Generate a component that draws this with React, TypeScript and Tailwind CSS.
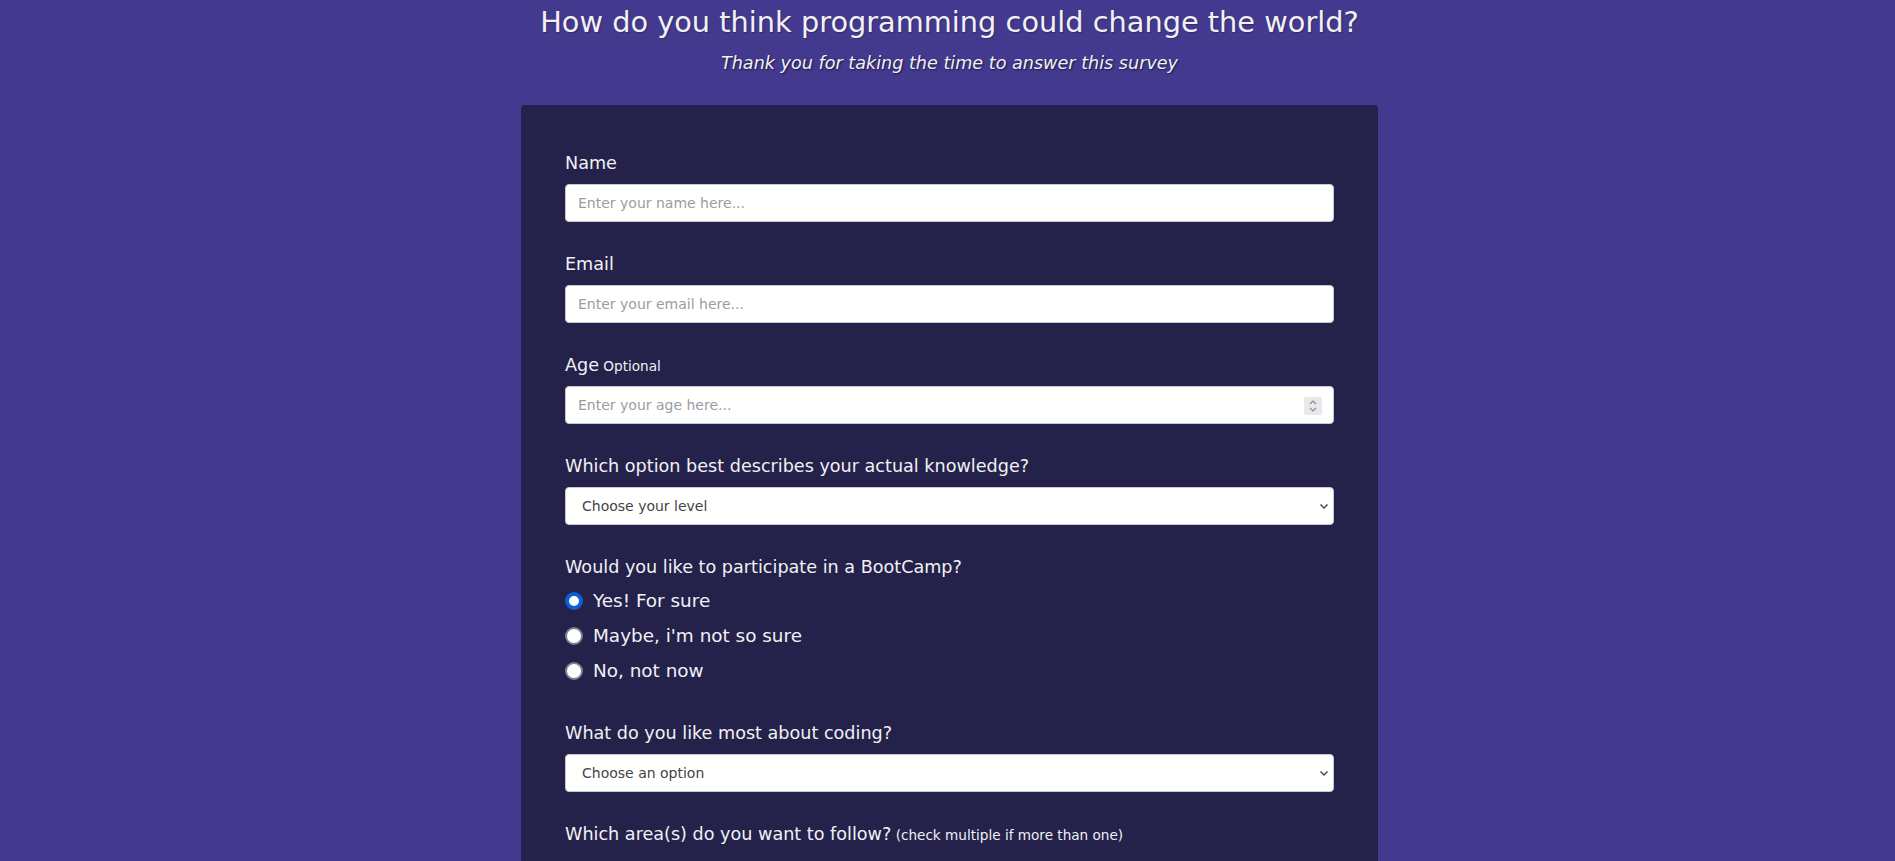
import { useState } from "react";

const levels = ["Choose your level", "Beginner", "Intermediate", "Advanced"];
const likes = ["Choose an option", "Problem solving", "Building things", "The community"];
const areas = ["Front-end", "Back-end", "Mobile", "Data science"];

const Label = ({ text, hint }: { text: string; hint?: string }) => (
    <p className="h-[20.5px] text-[17.6px] leading-[20.5px] text-[#f1f1f4]">
        {text}
        {hint && <span className="text-[13.6px] leading-none"> {hint}</span>}
    </p>
);

const inputCls =
    "w-full h-[38px] rounded-[4px] border border-[#c9c9d3] bg-white px-3 text-[14px] text-[#333] outline-none placeholder:text-[#9b9ba4]";

const Chevron = () => (
    <svg className="pointer-events-none absolute right-[5px] top-1/2 -translate-y-1/2" width="10" height="8" viewBox="0 0 10 8">
        <path d="M1.5 2.5 L5 6 L8.5 2.5" fill="none" stroke="#4a4a55" strokeWidth="1.5" />
    </svg>
);

const Select = ({ options }: { options: string[] }) => (
    <div className="relative">
        <select className={inputCls + " appearance-none pl-4 text-[#444]"} defaultValue={options[0]}>
            {options.map((o) => (
                <option key={o}>{o}</option>
            ))}
        </select>
        <Chevron />
    </div>
);

const App = () => {
    const [camp, setCamp] = useState("yes");

    return (
        <div className="h-screen overflow-y-auto [scrollbar-width:none] bg-[#43398f] pl-1 font-['DejaVu_Sans',Verdana,sans-serif] text-[#f1f1f4]">
            <header className="pt-[6px] text-center">
                <h1 className="text-[28.8px] leading-[33.5px] [text-shadow:1px_1px_1px_rgba(0,0,0,0.25)]">
                    How do you think programming could change the world?
                </h1>
                <p className="mt-[13px] text-[17.6px] leading-[20.5px] italic [text-shadow:1px_1px_2px_rgba(0,0,0,0.6)]">
                    Thank you for taking the time to answer this survey
                </p>
            </header>

            <form className="mx-auto mt-[32px] mb-10 w-[857px] rounded-[4px] bg-[#24214a] px-[44px] pt-[48px] pb-10">
                <div className="flex flex-col gap-[10.5px]">
                    <Label text="Name" />
                    <input className={inputCls} placeholder="Enter your name here..." />
                </div>

                <div className="mt-8 flex flex-col gap-[10.5px]">
                    <Label text="Email" />
                    <input className={inputCls} type="email" placeholder="Enter your email here..." />
                </div>

                <div className="mt-8 flex flex-col gap-[10.5px]">
                    <Label text="Age" hint="Optional" />
                    <div className="relative">
                        <input
                            className={inputCls + " [appearance:textfield] [&::-webkit-inner-spin-button]:appearance-none"}
                            type="number"
                            placeholder="Enter your age here..."
                        />
                        <div className="pointer-events-none absolute right-3 top-1/2 flex h-[18px] w-[18px] -translate-y-[calc(50%-1px)] flex-col items-center justify-center gap-[2px] rounded-[2px] bg-[#e9e9ed]">
                            <svg width="8" height="5" viewBox="0 0 8 5">
                                <path d="M1 4 L4 1 L7 4" fill="none" stroke="#8a8a95" strokeWidth="1.2" />
                            </svg>
                            <svg width="8" height="5" viewBox="0 0 8 5">
                                <path d="M1 1 L4 4 L7 1" fill="none" stroke="#8a8a95" strokeWidth="1.2" />
                            </svg>
                        </div>
                    </div>
                </div>

                <div className="mt-8 flex flex-col gap-[10.5px]">
                    <Label text="Which option best describes your actual knowledge?" />
                    <Select options={levels} />
                </div>

                <div className="mt-8">
                    <Label text="Would you like to participate in a BootCamp?" />
                    <div className="mt-[6px] flex flex-col">
                        {[
                            ["yes", "Yes! For sure"],
                            ["maybe", "Maybe, i'm not so sure"],
                            ["no", "No, not now"],
                        ].map(([v, t]) => (
                            <label key={v} className="flex h-[35px] items-center gap-[10px] text-[18.4px]">
                                <input
                                    type="radio"
                                    name="camp"
                                    checked={camp === v}
                                    onChange={() => setCamp(v)}
                                    className="h-[18px] w-[18px] shrink-0 appearance-none rounded-full border-2 border-[#7f7f8a] bg-white checked:border-[4px] checked:border-[#0b5fd8]"
                                />
                                {t}
                            </label>
                        ))}
                    </div>
                </div>

                <div className="mt-[34px] flex flex-col gap-[11px]">
                    <Label text="What do you like most about coding?" />
                    <Select options={likes} />
                </div>

                <div className="mt-8">
                    <Label text="Which area(s) do you want to follow?" hint="(check multiple if more than one)" />
                    <div className="mt-[14px] flex flex-col gap-3">
                        {areas.map((a) => (
                            <label key={a} className="flex items-center gap-[10px] text-[18.4px]">
                                <input
                                    type="checkbox"
                                    className="h-[17px] w-[17px] shrink-0 appearance-none rounded-[3px] border-2 border-[#8f8f9d] bg-white checked:bg-[#0b5fd8]"
                                />
                                {a}
                            </label>
                        ))}
                    </div>
                </div>

                <div className="mt-8 flex flex-col gap-[10.5px]">
                    <Label text="Any comments or suggestions?" />
                    <textarea className="h-28 w-full rounded-[4px] border border-[#c9c9d3] bg-white p-3 text-[14px] text-[#333] outline-none" placeholder="Enter your comment here..." />
                </div>

                <button type="button" className="mt-8 h-[42px] w-full rounded-[4px] bg-[#3b9b55] text-[17.6px] text-white">
                    Submit
                </button>
            </form>
        </div>
    );
};

export default App;
